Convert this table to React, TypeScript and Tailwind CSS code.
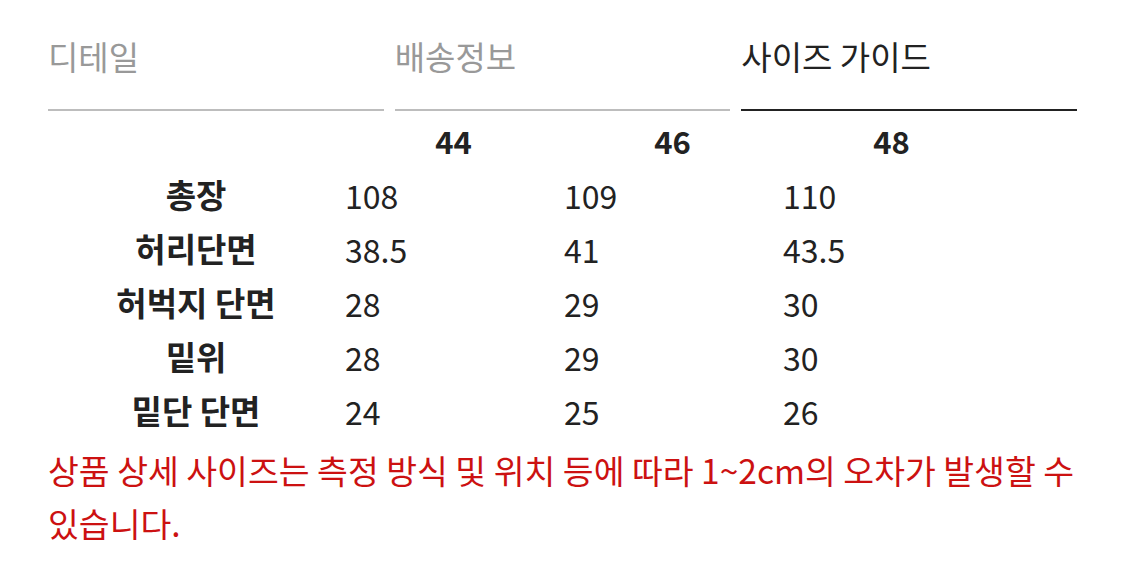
const tabs = [
  { label: "디테일", active: false },
  { label: "배송정보", active: false },
  { label: "사이즈 가이드", active: true },
];

const sizes = ["44", "46", "48"];

const rows: { name: string; values: string[] }[] = [
  { name: "총장", values: ["108", "109", "110"] },
  { name: "허리단면", values: ["38.5", "41", "43.5"] },
  { name: "허벅지 단면", values: ["28", "29", "30"] },
  { name: "밑위", values: ["28", "29", "30"] },
  { name: "밑단 단면", values: ["24", "25", "26"] },
];

export default function App() {
  return (
    <div className="min-h-screen bg-white px-12 pt-[36px] font-['Noto_Sans_CJK_KR','Noto_Sans',sans-serif]">
      <div className="flex gap-[11px]">
        {tabs.map((t) => (
          <div
            key={t.label}
            className={`flex-1 border-b-2 pb-[33px] text-[33px] leading-[40px] ${t.active ? "border-[#222] text-[#222]" : "border-[#bdbdbd] text-[#999]"}`}
          >
            {t.label}
          </div>
        ))}
      </div>

      <div className="mt-[3px] grid grid-cols-[296px_219px_219px_219px] text-[#222]">
        <div className="h-[54px]" />
        {sizes.map((s) => (
          <div key={s} className="flex h-[54px] items-center justify-center text-[31px] font-bold">
            {s}
          </div>
        ))}
        {rows.map((r) => (
          <>
            <div key={r.name} className="flex h-[54px] items-center justify-center text-[33px] font-bold">
              {r.name}
            </div>
            {r.values.map((v, i) => (
              <div key={r.name + i} className="flex h-[54px] items-center pl-[1px] text-[32px]">
                {v}
              </div>
            ))}
          </>
        ))}
      </div>

      {/* line break kept where the original wraps */}
      <p className="mt-[5px] whitespace-nowrap text-[33.5px] leading-[53px] text-[#cc1111]">
        상품 상세 사이즈는 측정 방식 및 위치 등에 따라 1~2cm의 오차가 발생할 수
        <br />
        있습니다.
      </p>
    </div>
  );
}
